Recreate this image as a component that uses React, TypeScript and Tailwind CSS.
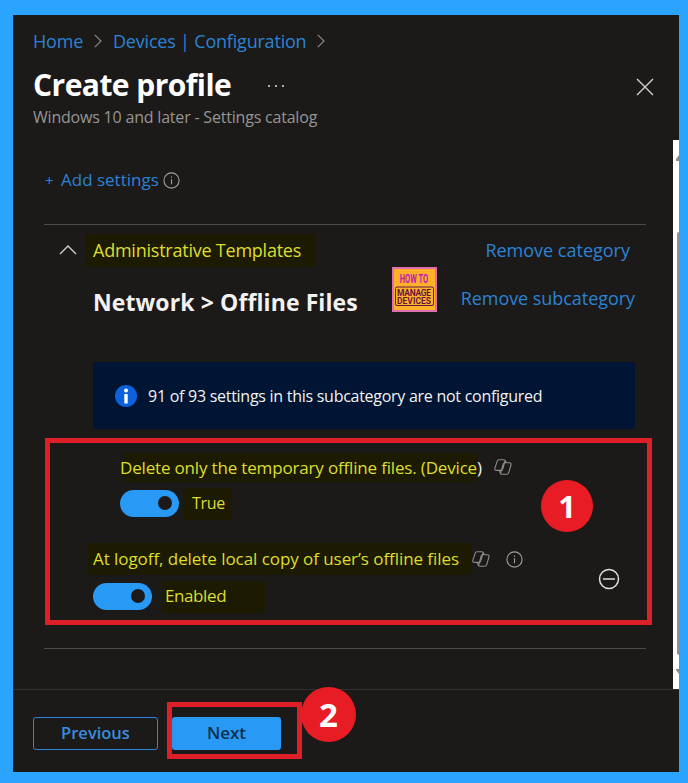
import clsx from "clsx";

function Chevron({ className }: { className?: string }) {
  return (
    <svg viewBox="0 0 8 14" fill="none" stroke="#8a8886" strokeWidth="1.2" className={clsx("w-[8px] h-[14px] shrink-0", className)}>
      <path d="M.8.8 7 7 .8 13.2" />
    </svg>
  );
}

function InfoCircle() {
  return (
    <svg viewBox="0 0 17 17" fill="none" stroke="#a19f9d" strokeWidth="1.1" className="w-[17px] h-[17px] shrink-0">
      <circle cx="8.5" cy="8.5" r="7.6" />
      <path d="M8.5 7.2v5M8.5 4.5v1.2" />
    </svg>
  );
}

function CopilotIcon() {
  return (
    <svg viewBox="0 0 18 16" fill="none" stroke="#8f8d8b" strokeWidth="1.1" strokeLinejoin="round" className="w-[18px] h-[16px] shrink-0">
      <path d="M12.3 3.8 11.6 2Q11.200.8 10 .8H5Q3.600.8 3.200 2.100L.9 9.200q-.5 2.200 1.500 2.200h4.800q1.200 0 1.500-1.200L11 2" />
      <path d="m5.400 11.600.8 2.400q.4 1.200 1.700 1.200h4.900q1.400 0 1.800-1.300L17 6q.5-2.200-1.600-2.200h-4.600q-1.200 0-1.600 1.200L6.800 13.600" />
    </svg>
  );
}

function Toggle() {
  return (
    <div className="flex justify-end items-center w-[59px] h-[27px] pr-[7px] rounded-full bg-[#2899f5] shrink-0">
      <div className="w-[14px] h-[14px] rounded-full bg-[#1b1a19]" />
    </div>
  );
}

function Logo() {
  return (
    <div className="w-[45px] h-[45px] shrink-0">
      <svg viewBox="0 0 45 45" fontFamily="Roboto, sans-serif" className="w-[45px] h-[45px]">
        <path d="M0 0h45v45H0z" fill="#e06fae" />
        <path d="M2 2h41v41H2z" fill="#ffb229" />
        <text x="22" y="15.8" transform="matrix(.63 0 0 1 8.140 0)" textAnchor="middle" fontSize="12" fontWeight="700" fill="#c21ab0">HOW TO</text>
        <rect x="3.5" y="20" width="38" height="18.5" rx="1.5" fill="none" stroke="#5c1747" />
        <text x="5" y="28.500" textLength="34" fontSize="8.500" fontWeight="700" fill="#6a123f">MANAGE</text>
        <text x="5" y="37" textLength="34" fontSize="8.500" fontWeight="700" fill="#6a123f">DEVICES</text>
      </svg>
    </div>
  );
}

export default function App() {
  return (
    <div className="w-[688px] h-[783px] overflow-hidden bg-[#2ba4ff] pl-[13px] pt-[15px] pr-[9px] pb-[11px] font-['Open_Sans','Noto_Sans',sans-serif]">
      <div className="flex flex-col h-full bg-[#1b1a19]">
        <header className="h-[125px] pl-[20px] pr-[25px] pt-[14px] shrink-0">
          <nav className="flex items-center h-[24px] text-[18px] leading-[24px] text-[#2c82d4] whitespace-nowrap">
            <span className="w-[61px] tracking-[-0.2px]">Home</span>
            <Chevron />
            <span className="w-[204px] ml-[11px] tracking-[-0.2px]">Devices | Configuration</span>
            <Chevron />
          </nav>
          <div className="flex items-center h-[44px] mt-[9px]">
            <h1 className="w-[235px] text-[30px] font-bold text-white whitespace-nowrap tracking-[-0.55px]">Create profile</h1>
            <div className="flex gap-[5px] mt-[4px]">
              <span className="w-[2px] h-[2px] bg-[#b0aeac]" />
              <span className="w-[2px] h-[2px] bg-[#b0aeac]" />
              <span className="w-[2px] h-[2px] bg-[#b0aeac]" />
            </div>
            <svg viewBox="0 0 18 18" fill="none" stroke="#d2d0ce" strokeWidth="1.4" className="w-[18px] h-[18px] ml-auto mt-[5px]">
              <path d="m1 1 16 16M17 1 1 17" />
            </svg>
          </div>
          <p className="h-[22px] leading-[22px] text-[16px] text-[#979593] whitespace-nowrap tracking-[-0.2px]">
            Windows 10 and later - Settings catalog
          </p>
        </header>

        <div className="flex h-[549px] shrink-0">
          <main className="w-[660px] pl-[32px] pt-[28px]">
            <div className="flex items-center h-[24px] text-[17px] text-[#2c82d4] whitespace-nowrap">
              <span className="w-[16px] text-[15px]">+</span>
              <span className="w-[102px]">Add settings</span>
              <InfoCircle />
            </div>

            <section className="w-[602px] h-[425px] mt-[32px] -ml-px border-t border-b border-[#4b4a48]">
              <div className="flex items-center h-[34px] mt-[8px] pl-[15px]">
                <svg viewBox="0 0 18 10" fill="none" stroke="#d2d0ce" strokeWidth="1.4" className="w-[18px] h-[10px]">
                  <path d="m1 9 8-8 8 8" />
                </svg>
                <span className="flex items-center w-[229px] h-[33px] ml-[9px] pl-[7px] rounded-[3px] bg-[#1c1a00] text-[18px] text-[#dede2c] whitespace-nowrap tracking-[-0.23px]">
                  Administrative Templates
                </span>
                <span className="ml-auto mr-[16px] text-[18px] text-[#2c82d4] whitespace-nowrap">Remove category</span>
              </div>

              <div className="flex items-start h-[46px] pl-[49px]">
                <h2 className="w-[299px] pt-[19px] text-[23px] leading-[32px] font-bold text-[#f3f2f1] whitespace-nowrap tracking-[0.1px]">
                  Network &gt; Offline Files
                </h2>
                <Logo />
                <span className="pt-[18px] ml-auto mr-[11px] text-[18px] leading-[27px] text-[#2c82d4] whitespace-nowrap tracking-[-0.05px]">
                  Remove subcategory
                </span>
              </div>

              <div className="flex items-center w-[542px] h-[67px] ml-[49px] mt-[49px] pl-[22px] rounded-[2px] bg-[#001433]">
                <svg viewBox="0 0 22 22" className="w-[22px] h-[22px] shrink-0">
                  <circle cx="11" cy="11" r="11" fill="#0b62dc" />
                  <circle cx="11" cy="5.5" r="2" fill="#fff" />
                  <path d="M9.300 9h3.400v9.500H9.300z" fill="#fff" />
                </svg>
                <span className="ml-[11px] text-[16px] text-[#f3f2f1] whitespace-nowrap tracking-[-0.27px]">
                  91 of 93 settings in this subcategory are not configured
                </span>
              </div>

              <div className="flex w-[607px] h-[187px] ml-[1px] mt-[9px] border-[5px] border-[#df1f28]">
                <div className="w-[491px] shrink-0">
                  <div className="flex items-center h-[30px] mt-[9px] ml-[70px]">
                    <span className="w-[374px] text-[17px] leading-[29px] text-[#f3f2f1] whitespace-nowrap tracking-[-0.17px]">
                      <span className="inline-block rounded-[3px] bg-[linear-gradient(90deg,transparent_3px,#1c1a00_3px)]">
                        <span className="text-[#dede2c]">Delete only the temporary offline files. (Device</span>
                      </span>
                      )
                    </span>
                    <CopilotIcon />
                  </div>
                  <div className="flex items-center h-[34px] mt-[4px] ml-[70px]">
                    <Toggle />
                    <span className="w-[49px] h-[32px] leading-[31px] ml-[4px] mt-[2px] pl-[9px] rounded-[2px] bg-[#1c1a00] text-[16px] text-[#dede2c] tracking-[-0.3px]">
                      True
                    </span>
                  </div>
                  <div className="flex items-center h-[32px] mt-[23px] ml-[37px]">
                    <span className="w-[385px] h-[32px] leading-[32px] pl-[6px] rounded-[3px] bg-[#1c1a00] text-[17px] text-[#dede2c] whitespace-nowrap tracking-[-0.06px] shrink-0">
                      At logoff, delete local copy of user’s offline files
                    </span>
                    <CopilotIcon />
                    <span className="ml-[16px]">
                      <InfoCircle />
                    </span>
                  </div>
                  <div className="flex items-center h-[36px] mt-[3px] ml-[43px]">
                    <Toggle />
                    <span className="w-[103px] h-[32px] leading-[30px] ml-[10px] mt-[2px] pl-[3px] rounded-[2px] bg-[#1c1a00] text-[17px] text-[#dede2c] tracking-[-0.4px]">
                      Enabled
                    </span>
                  </div>
                </div>
                <div className="flex flex-col">
                  <span className="flex items-center justify-center w-[52px] h-[52px] mt-[37px] rounded-full bg-[#e81c24] text-[31px] font-bold text-white">
                    1
                  </span>
                  <svg viewBox="0 0 22 22" fill="none" stroke="#e1dfdd" strokeWidth="1.5" className="w-[22px] h-[22px] ml-[57px] mt-[36px]">
                    <circle cx="11" cy="11" r="9.5" />
                    <path d="M5 11h12" />
                  </svg>
                </div>
              </div>
            </section>
          </main>

          <div className="flex flex-col items-end w-[6px] h-full bg-white">
            <svg viewBox="0 0 3 6" className="w-[3px] h-[6px] mt-[15px]">
              <path d="M3 0v6H0V4z" fill="#8b8b8b" />
            </svg>
            <div className="w-[2px] h-[423px] mt-[71px] rounded-l bg-[#8b9197]" />
            <svg viewBox="0 0 3 5" className="w-[3px] h-[5px] mt-[14px]">
              <path d="M0 0h3v5L0 1z" fill="#8b8b8b" />
            </svg>
          </div>
        </div>

        <footer className="flex items-start h-[83px] border-t border-[#323130] pl-[20px]">
          <button className="w-[125px] h-[33px] mt-[27px] pb-[2px] rounded-[3px] border border-solid border-[#2e86dc] text-[16.5px] leading-[28px] font-semibold text-[#3a8ddd]">
            Previous
          </button>
          <div className="w-[135px] h-[57px] mt-[12px] ml-[9px] border-[5px] border-[#df1f28]">
            <button className="w-[109px] h-[33px] mt-[10px] pb-[2px] rounded-[3px] bg-[#2899f5] text-[17px] leading-[29px] font-semibold text-[#10304d]">
              Next
            </button>
          </div>
          <span className="flex items-center justify-center w-[55px] h-[55px] -mt-[3px] -ml-px rounded-full bg-[#e81c24] text-[33px] font-bold text-white">
            2
          </span>
        </footer>
      </div>
    </div>
  );
}
